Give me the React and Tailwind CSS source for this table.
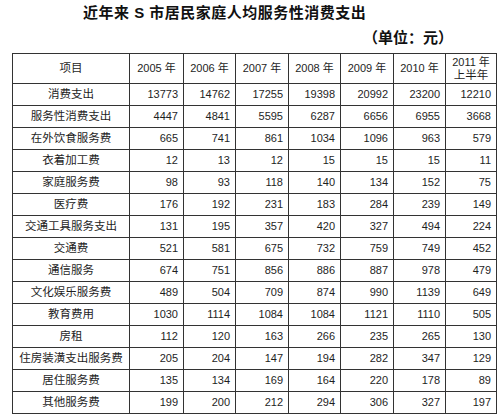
const years = ['2005 年', '2006 年', '2007 年', '2008 年', '2009 年', '2010 年'];

const rows = [
  ['消费支出', 13773, 14762, 17255, 19398, 20992, 23200, 12210],
  ['服务性消费支出', 4447, 4841, 5595, 6287, 6656, 6955, 3668],
  ['在外饮食服务费', 665, 741, 861, 1034, 1096, 963, 579],
  ['衣着加工费', 12, 13, 12, 15, 15, 15, 11],
  ['家庭服务费', 98, 93, 118, 140, 134, 152, 75],
  ['医疗费', 176, 192, 231, 183, 284, 239, 149],
  ['交通工具服务支出', 131, 195, 357, 420, 327, 494, 224],
  ['交通费', 521, 581, 675, 732, 759, 749, 452],
  ['通信服务', 674, 751, 856, 886, 887, 978, 479],
  ['文化娱乐服务费', 489, 504, 709, 874, 990, 1139, 649],
  ['教育费用', 1030, 1114, 1084, 1084, 1121, 1110, 505],
  ['房租', 112, 120, 163, 266, 235, 265, 130],
  ['住房装潢支出服务费', 205, 204, 147, 194, 282, 347, 129],
  ['居住服务费', 135, 134, 169, 164, 220, 178, 89],
  ['其他服务费', 199, 200, 212, 294, 306, 327, 197],
];

const widths = ['w-[117px]', 'w-[54px]', 'w-[52px]', 'w-[53px]', 'w-[52px]', 'w-[53px]', 'w-[52px]', 'w-[51px]'];

export default function App() {
  return (
    <div className="w-[499px] h-[417px] bg-white text-[#1e1e1e] font-['Liberation_Sans','Noto_Sans_CJK_SC',sans-serif] overflow-hidden">
      <div className="pt-[3px] pl-[83px] h-[22px] leading-[20px] text-[15px] font-bold tracking-[0.5px] text-[#111]">
        近年来 S 市居民家庭人均服务性消费支出
      </div>
      <div className="mt-[6px] flex justify-end pr-[46px] h-[20px] leading-[20px] text-[15px] font-bold text-[#111]">
        （单位：元）
      </div>
      <table className="mt-[5px] ml-[12px] w-[485px] table-fixed border-collapse border border-[#333]">
        <colgroup>
          {widths.map((w, i) => (
            <col key={i} className={w} />
          ))}
        </colgroup>
        <thead>
          <tr className="h-[30px]">
            <th className="border border-[#333] font-normal text-[11.5px] text-center">项目</th>
            {years.map((y) => (
              <th key={y} className="border border-[#333] font-normal text-[11px] text-center">
                {y}
              </th>
            ))}
            <th className="border border-[#333] font-normal text-[11px] text-center leading-[13px]">
              2011 年<br />
              <span className="text-[11.5px]">上半年</span>
            </th>
          </tr>
        </thead>
        <tbody>
          {rows.map((r) => (
            <tr key={r[0]} className="h-[22px]">
              <td className="border border-[#333] text-center text-[11.5px] p-0 whitespace-nowrap">{r[0]}</td>
              {r.slice(1).map((v, j) => (
                <td key={j} className="border border-[#333] text-right text-[11px] pr-[5px] p-0">
                  {v}
                </td>
              ))}
            </tr>
          ))}
        </tbody>
      </table>
    </div>
  );
}
